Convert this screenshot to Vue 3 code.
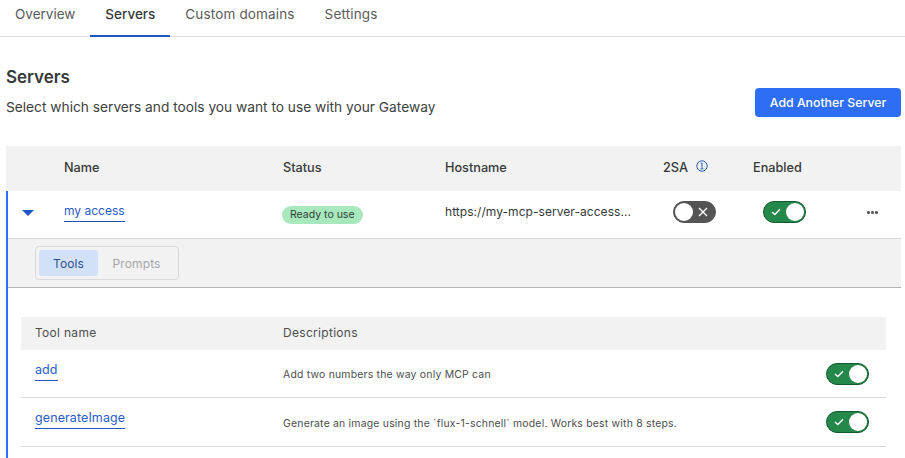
<script setup>
const tabs = [
  { label: 'Overview', active: false },
  { label: 'Servers', active: true },
  { label: 'Custom domains', active: false },
  { label: 'Settings', active: false },
]
const tools = [
  { name: 'add', desc: 'Add two numbers the way only MCP can' },
  { name: 'generateImage', desc: 'Generate an image using the `flux-1-schnell` model. Works best with 8 steps.' },
]
</script>

<template>
  <div class="page">
    <nav class="tabs">
      <a v-for="t in tabs" :key="t.label" class="tab" :class="{ active: t.active }">{{ t.label }}</a>
    </nav>

    <header class="head">
      <div>
        <h1>Servers</h1>
        <p>Select which servers and tools you want to use with your Gateway</p>
      </div>
      <button class="add">Add Another Server</button>
    </header>

    <section class="table">
      <div class="grid thead">
        <span></span>
        <span>Name</span>
        <span>Status</span>
        <span>Hostname</span>
        <span class="twosa">2SA
          <svg width="12" height="12" viewBox="0 0 12 12" fill="none" stroke="#2a5bc0" stroke-width="1">
            <circle cx="6" cy="6" r="5.2" />
            <path d="M4.8 3.2h1.5M6 3.2v5.4M4.6 8.8h2.8" />
          </svg>
        </span>
        <span>Enabled</span>
        <span></span>
      </div>

      <div class="expanded">
        <div class="grid row">
          <span class="caret"></span>
          <span class="name-cell"><a class="link small">my access</a></span>
          <span class="status-cell"><span class="badge">Ready to use</span></span>
          <span class="host">https://my-mcp-server-access...</span>
          <span class="toggle off">
            <i class="knob"></i>
            <svg class="x" width="10" height="10" viewBox="0 0 10 10" stroke="#fff" stroke-width="1.3" fill="none"><path d="M1 1l8 8M9 1l-8 8" /></svg>
          </span>
          <span class="toggle on">
            <svg class="check" width="10" height="8" viewBox="0 0 10 8" stroke="#fff" stroke-width="1.4" fill="none"><path d="M1 4l2.8 2.6L9 1.2" /></svg>
            <i class="knob"></i>
          </span>
          <span class="more"><i></i><i></i><i></i></span>
        </div>

        <div class="subbar">
          <div class="segment">
            <span class="seg active">Tools</span>
            <span class="seg">Prompts</span>
          </div>
        </div>

        <div class="tools">
          <div class="tgrid tthead">
            <span>Tool name</span>
            <span>Descriptions</span>
          </div>
          <div v-for="t in tools" :key="t.name" class="tgrid trow">
            <span class="tname"><a class="link">{{ t.name }}</a></span>
            <span class="desc">{{ t.desc }}</span>
            <span class="toggle on">
              <svg class="check" width="10" height="8" viewBox="0 0 10 8" stroke="#fff" stroke-width="1.4" fill="none"><path d="M1 4l2.8 2.6L9 1.2" /></svg>
              <i class="knob"></i>
            </span>
          </div>
        </div>
      </div>
    </section>
  </div>
</template>

<style>
html, body { margin: 0; background: #fff; overflow: hidden; }
</style>

<style scoped>
.page {
  width: 905px;
  height: 458px;
  overflow: hidden;
  font-family: Inter, "Liberation Sans", sans-serif;
  color: #36393a;
  font-size: 13px;
}
.tabs {
  display: flex;
  height: 36px;
  border-bottom: 1px solid #d9d9d9;
}
.tab {
  box-sizing: border-box;
  height: 37px;
  padding: 5px 15px 0;
  font-size: 13.5px;
  line-height: 18px;
  letter-spacing: 0.15px;
  color: #595b5c;
}
.tab:first-child { letter-spacing: 0; }
.tab.active {
  color: #36393a;
  font-weight: 500;
  letter-spacing: 0;
  border-bottom: 2px solid #2255c4;
}
.head {
  display: flex;
  justify-content: space-between;
  align-items: flex-start;
  padding: 28px 4px 0 6px;
  height: 81px;
}
h1 {
  margin: 0;
  font-size: 17px;
  line-height: 24px;
  font-weight: 600;
  color: #36393a;
}
.head p {
  margin: 8px 0 0;
  font-size: 13.72px;
  line-height: 20px;
  color: #3d4041;
}
.add {
  margin-top: 23px;
  width: 146px;
  height: 29px;
  border: 0;
  border-radius: 4px;
  background: #2e6ef7;
  color: #fff;
  font: 500 12.3px Inter, "Liberation Sans", sans-serif;
}
.table {
  margin: 0 4px 0 6px;
}
.grid {
  display: grid;
  grid-template-columns: 58px 219px 162px 218px 90px 107px 41px;
  align-items: center;
}
.thead {
  box-sizing: border-box;
  height: 45px;
  padding-bottom: 3px;
  background: #f2f2f2;
  font-weight: 500;
  font-size: 12.7px;
}
.twosa {
  display: flex;
  align-items: center;
  gap: 8px;
}
.twosa svg {
  position: relative;
  top: -1px;
}
.expanded {
  border-left: 2px solid #2e6ef7;
  height: 300px;
}
.row {
  grid-template-columns: 56px 219px 162px 218px 90px 107px 41px;
  height: 47px;
  border-bottom: 1px solid #d9d9d9;
}
.caret {
  margin-left: 14px;
  width: 0;
  height: 0;
  border-left: 6px solid transparent;
  border-right: 6px solid transparent;
  border-top: 6px solid #2255c4;
  position: relative;
  top: -2px;
}
.link {
  color: #2a5cc8;
  font-size: 12.5px;
  line-height: 16px;
  letter-spacing: 0.1px;
  border-bottom: 1px solid #2255c4;
  display: inline-block;
  padding-bottom: 2px;
}
.link.small {
  font-size: 12px;
  letter-spacing: 0;
}
.name-cell {
  position: relative;
  top: -3px;
}
.status-cell {
  display: flex;
  margin-left: -1px;
}
.badge {
  height: 18px;
  line-height: 18px;
  padding: 0 8px;
  border-radius: 9px;
  background: #a8e8bd;
  font-size: 10.5px;
  color: #2f3d35;
}
.host {
  font-size: 12px;
  letter-spacing: 0.05px;
  white-space: nowrap;
  position: relative;
  top: -3px;
}
.toggle {
  position: relative;
  display: block;
  box-sizing: border-box;
  width: 43px;
  height: 22px;
  border-radius: 11px;
}
.row .toggle {
  top: -3px;
}
.toggle .knob {
  position: absolute;
  top: 2px;
  width: 18px;
  height: 18px;
  border-radius: 50%;
  background: #fff;
}
.toggle.off {
  background: #545454;
  margin-left: 10px;
  border: 1px solid #545454;
}
.toggle.off .knob { left: 1px; top: 1px; }
.toggle.off .x { position: absolute; right: 7px; top: 5px; }
.toggle.on {
  background: #23884a;
  border: 1px solid #12592f;
}
.toggle.on .knob { right: 1px; top: 1px; }
.toggle.on .check { position: absolute; left: 7px; top: 6px; }
.row .toggle.on { margin-left: 10px; }
.more {
  display: flex;
  gap: 1.5px;
  justify-content: center;
  padding-right: 16px;
  position: relative;
  top: -2px;
}
.more i {
  width: 2.5px;
  height: 2.5px;
  border-radius: 50%;
  background: #5a5a5a;
}
.subbar {
  box-sizing: border-box;
  height: 49px;
  padding: 7px 0 0 27px;
  background: #f2f2f2;
  border-bottom: 1px solid #b4b4b4;
}
.segment {
  box-sizing: border-box;
  display: flex;
  width: 144px;
  height: 34px;
  padding: 3px;
  border: 1px solid #d9d9d9;
  border-radius: 4px;
}
.seg {
  display: flex;
  align-items: center;
  justify-content: center;
  width: 60px;
  height: 26px;
  font-size: 12px;
  letter-spacing: 0.1px;
  color: #a6a6a6;
  border-radius: 3px;
}
.seg + .seg { width: 78px; }
.seg.active {
  background: #d3e1f8;
  color: #2b4f93;
}
.tools {
  margin: 29px 15px 0 13px;
}
.tgrid {
  display: grid;
  grid-template-columns: 248px 1fr auto;
  align-items: center;
  padding: 0 17px 0 14px;
}
.tthead {
  box-sizing: border-box;
  height: 33px;
  padding-bottom: 2px;
  background: #f2f2f2;
  font-size: 12px;
  letter-spacing: 0.3px;
  color: #4d4f50;
}
.trow {
  box-sizing: border-box;
  height: 48px;
  border-bottom: 1px solid #d9d9d9;
}
.trow:last-child { height: 49px; }
.tname { position: relative; top: -3px; }
.desc {
  font-size: 10.45px;
  letter-spacing: 0.2px;
  color: #4d4f50;
  position: relative;
  top: 1px;
}
</style>
